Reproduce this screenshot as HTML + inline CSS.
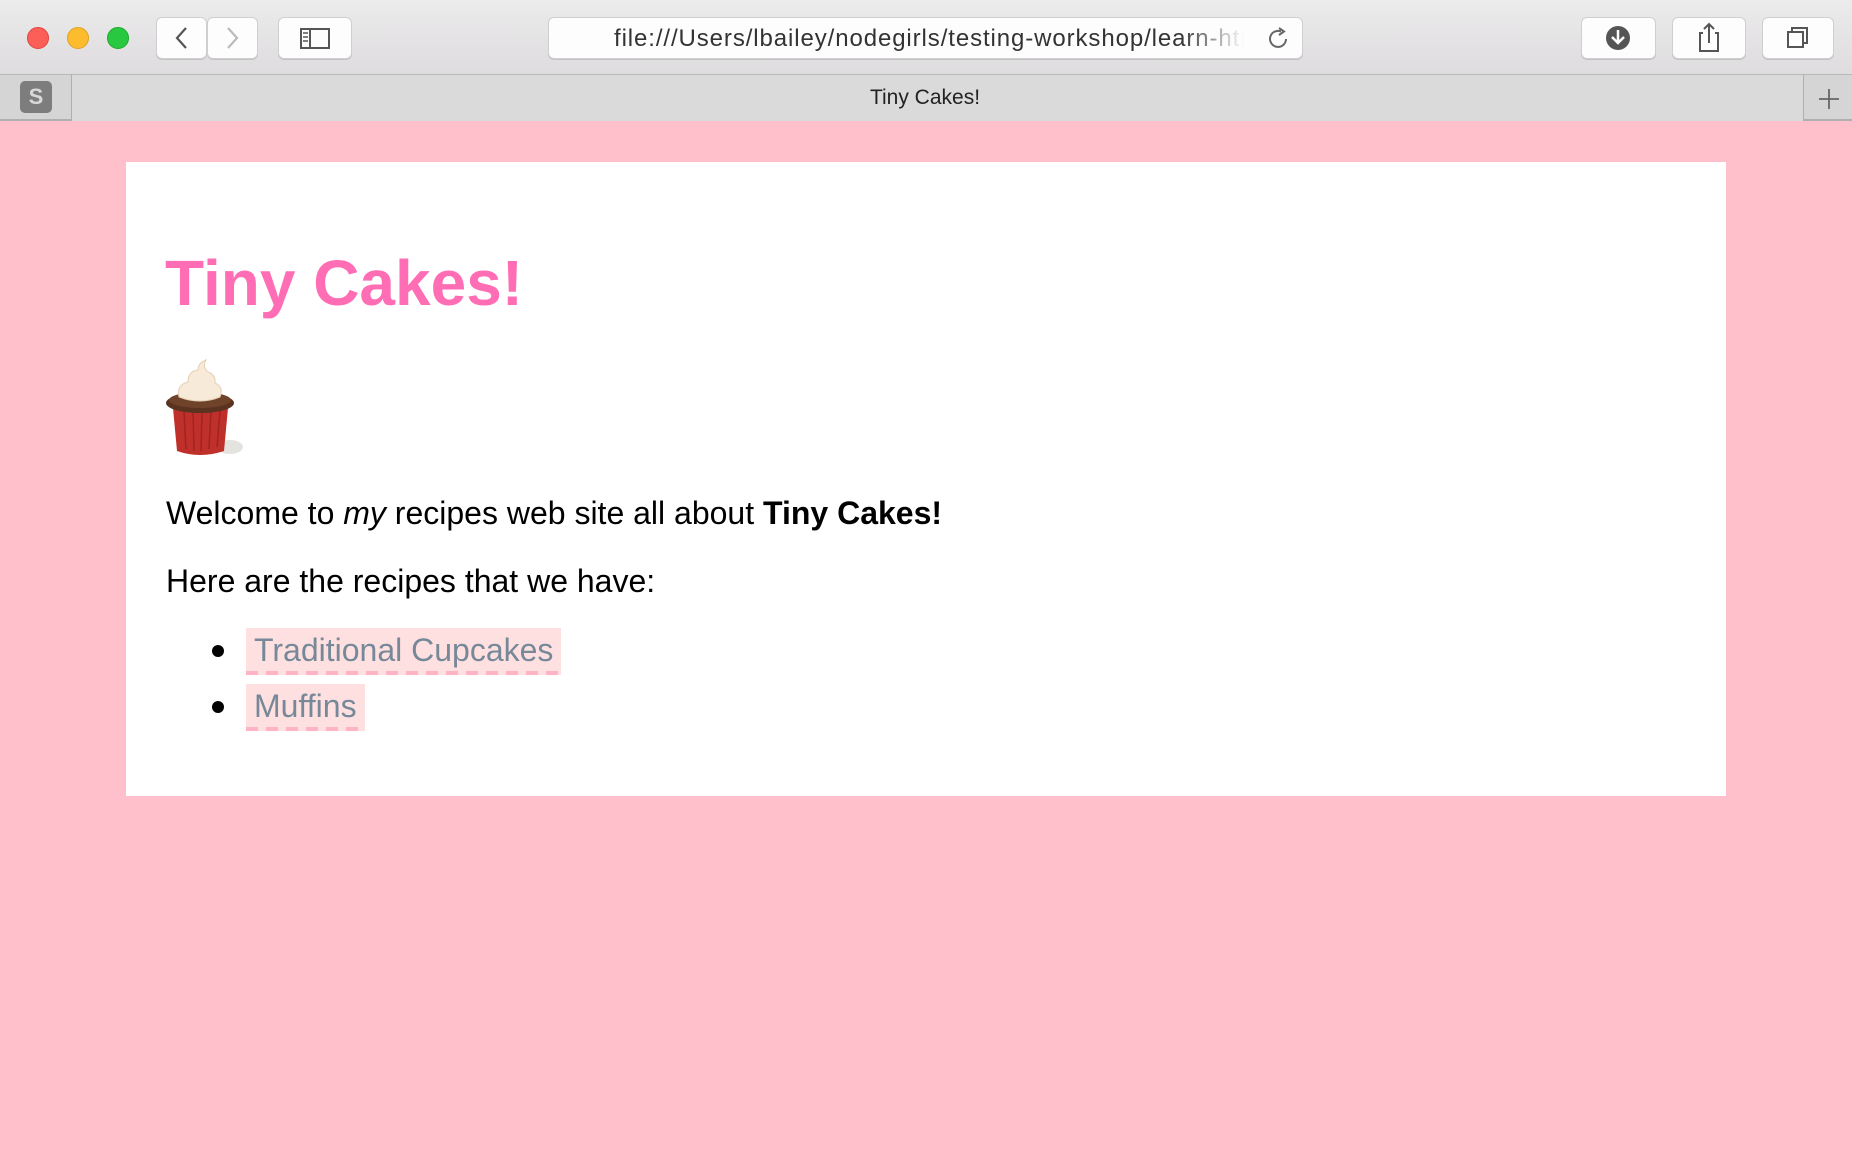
<!DOCTYPE html>
<html><head><meta charset="utf-8"><style>
*{margin:0;padding:0;box-sizing:border-box}
body{width:1852px;height:1159px;overflow:hidden;background:#ffc0cb;font-family:"Liberation Sans",Arial,sans-serif;position:relative}
.abs{position:absolute}
.toolbar{left:0;top:0;width:1852px;height:75px;background:linear-gradient(#ecebec,#dedcde);border-bottom:1px solid #b9b8b9}
.tabbar{left:0;top:75px;width:1852px;height:46px;background:#d6d5d6;border-bottom:2px solid #b0afb0}
.btn{background:#fdfdfd;border:1px solid #d0cfd0;border-radius:6px;box-shadow:0 1px 0 #c4c3c4}
.dot{width:22px;height:22px;border-radius:50%;top:27px}
.card{left:126px;top:162px;width:1600px;height:634px;background:#fff}
h1{position:absolute;left:165px;top:243px;font-size:64px;line-height:80px;color:#ff6eb4;font-weight:bold;white-space:nowrap}
.p{position:absolute;left:166px;font-size:32px;line-height:40px;color:#000;white-space:nowrap}
.link{position:absolute;left:246px;height:47px;background:#ffe0e0;color:#778899;font-size:32px;line-height:44px;padding:0 8px;white-space:nowrap}
.link::after{content:"";position:absolute;left:0;right:0;bottom:0;height:4px;background:repeating-linear-gradient(90deg,#ffb3c6 0 12px,transparent 12px 20px)}
.bul{position:absolute;left:212px;width:12px;height:12px;border-radius:50%;background:#000}
</style></head><body>
<div class="abs toolbar"></div>
<div class="abs dot" style="left:27px;background:#fc5f57;border:1px solid #e0443e"></div>
<div class="abs dot" style="left:67px;background:#fdbc2e;border:1px solid #dfa123"></div>
<div class="abs dot" style="left:107px;background:#28c840;border:1px solid #1aab29"></div>
<div class="abs btn" style="left:156px;top:17px;width:51px;height:42px"></div>
<div class="abs btn" style="left:207px;top:17px;width:51px;height:42px"></div>
<svg class="abs" style="left:156px;top:17px" width="102" height="42"><path d="M30 11 L21 21 L30 31" fill="none" stroke="#555" stroke-width="2.2"/><path d="M72 11 L81 21 L72 31" fill="none" stroke="#bbb" stroke-width="2.2"/></svg>
<div class="abs btn" style="left:278px;top:17px;width:74px;height:42px"></div>
<svg class="abs" style="left:278px;top:17px" width="74" height="42"><rect x="23" y="12" width="28" height="19" fill="none" stroke="#555" stroke-width="2"/><line x1="32" y1="12" x2="32" y2="31" stroke="#555" stroke-width="2"/><path d="M25 16h5M25 20h5M25 24h5" stroke="#555" stroke-width="1.5"/></svg>
<div class="abs btn" style="left:548px;top:17px;width:755px;height:42px"></div>
<div class="abs" style="left:614px;top:24px;width:630px;font-size:24px;letter-spacing:0.9px;line-height:30px;color:#333;white-space:nowrap;overflow:hidden;-webkit-mask-image:linear-gradient(90deg,#000 90%,transparent);mask-image:linear-gradient(90deg,#000 90%,transparent)">file:///Users/lbailey/nodegirls/testing-workshop/learn-html</div>
<svg class="abs" style="left:1266px;top:26px" width="26" height="26"><path d="M20 13 A8 8 0 1 1 15 5.5" fill="none" stroke="#666" stroke-width="2"/><path d="M13 2 L18 5.5 L13 9" fill="none" stroke="#666" stroke-width="2"/></svg>
<div class="abs btn" style="left:1581px;top:17px;width:75px;height:42px"></div>
<svg class="abs" style="left:1581px;top:17px" width="75" height="42"><circle cx="37" cy="21" r="12" fill="#555"/><path d="M37 13v13M31 20l6 6 6-6" fill="none" stroke="#fff" stroke-width="2.5"/></svg>
<div class="abs btn" style="left:1672px;top:17px;width:74px;height:42px"></div>
<svg class="abs" style="left:1672px;top:17px" width="74" height="42"><path d="M31 16h-3v18h18V16h-3" fill="none" stroke="#555" stroke-width="2"/><path d="M37 26V7M32 12l5-5 5 5" fill="none" stroke="#555" stroke-width="2"/></svg>
<div class="abs btn" style="left:1762px;top:17px;width:72px;height:42px"></div>
<svg class="abs" style="left:1762px;top:17px" width="72" height="42"><rect x="26" y="15" width="15" height="15" fill="none" stroke="#555" stroke-width="2"/><path d="M30 15v-4h15v15h-4" fill="none" stroke="#555" stroke-width="2"/></svg>
<div class="abs tabbar"></div>
<div class="abs" style="left:71px;top:75px;width:1733px;height:46px;border-left:1px solid #b0afb0;border-right:1px solid #b0afb0;background:#dbdadb"></div>
<div class="abs" style="left:20px;top:81px;width:32px;height:32px;border-radius:5px;background:#7d7d7d;color:#d8d8d8;font-weight:bold;font-size:22px;line-height:32px;text-align:center">S</div>
<div class="abs" style="left:725px;top:85px;width:400px;text-align:center;font-size:21px;line-height:26px;color:#222">Tiny Cakes!</div>
<svg class="abs" style="left:1816px;top:86px" width="26" height="26"><path d="M13 3v20M3 13h20" stroke="#666" stroke-width="1.8"/></svg>
<div class="abs card"></div>
<h1>Tiny Cakes!</h1>
<svg class="abs" style="left:160px;top:355px" width="90" height="110">
<ellipse cx="70" cy="92" rx="13" ry="7" fill="#e3e3e0"/>
<path d="M13 53 L68 53 L64 96 Q40 104 17 96 Z" fill="#c0302a"/>
<path d="M24 56l2 38M33 56l1 40M42 56l-1 40M51 56l-2 38M60 56l-3 36" stroke="#9e2420" stroke-width="1.5"/>
<ellipse cx="40" cy="48" rx="34" ry="10" fill="#5a3220"/>
<ellipse cx="40" cy="45" rx="31" ry="8" fill="#6f4329"/>
<path d="M19 42 Q16 30 28 27 Q28 16 38 15 Q38 8 46 5 Q42 12 48 17 Q56 20 55 28 Q64 32 60 42 Q40 50 19 42Z" fill="#f7ead8" stroke="#e5d0b5" stroke-width="1"/>
</svg>
<div class="p" style="top:493px">Welcome to <i>my</i> recipes web site all about <b>Tiny Cakes!</b></div>
<div class="p" style="top:561px">Here are the recipes that we have:</div>
<div class="bul" style="top:645px"></div>
<div class="link" style="top:628px;width:315px">Traditional Cupcakes</div>
<div class="bul" style="top:701px"></div>
<div class="link" style="top:684px;width:119px">Muffins</div>
</body></html>
